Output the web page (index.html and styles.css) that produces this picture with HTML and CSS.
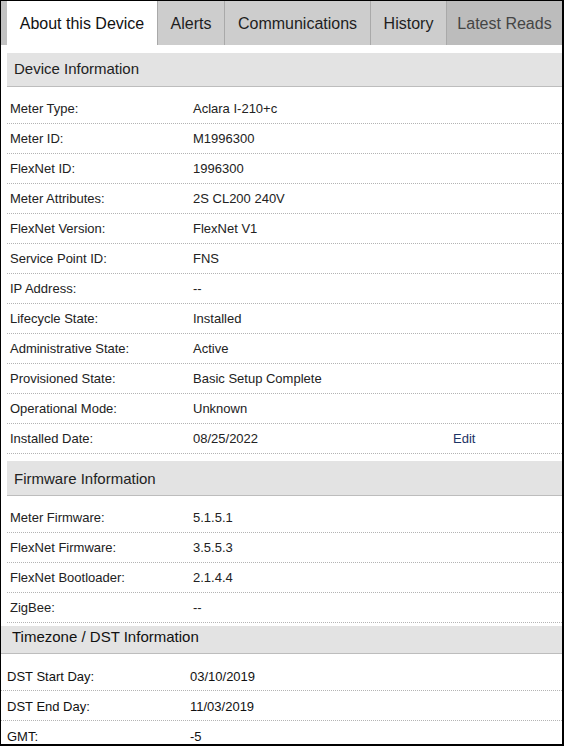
FILE: index.html
```html
<!DOCTYPE html>
<html lang="en">
<head>
<meta charset="utf-8">
<title>About this Device</title>
<link rel="stylesheet" href="styles.css">
</head>
<body>
<div class="frame">
  <div class="tabs">
    <div class="tab tab-active tab-about">About this Device</div>
    <div class="tab tab-alerts">Alerts</div>
    <div class="tab tab-comm">Communications</div>
    <div class="tab tab-history">History</div>
    <div class="tab tab-latest">Latest Reads</div>
  </div>
  <div class="content">
    <section class="section">
      <div class="sec-head">Device Information</div>
      <div class="rows">
        <div class="row"><div class="lbl">Meter Type:</div><div class="val">Aclara I-210+c</div><div class="act"></div></div>
        <div class="row"><div class="lbl">Meter ID:</div><div class="val">M1996300</div><div class="act"></div></div>
        <div class="row"><div class="lbl">FlexNet ID:</div><div class="val">1996300</div><div class="act"></div></div>
        <div class="row"><div class="lbl">Meter Attributes:</div><div class="val">2S CL200 240V</div><div class="act"></div></div>
        <div class="row"><div class="lbl">FlexNet Version:</div><div class="val">FlexNet V1</div><div class="act"></div></div>
        <div class="row"><div class="lbl">Service Point ID:</div><div class="val">FNS</div><div class="act"></div></div>
        <div class="row"><div class="lbl">IP Address:</div><div class="val">--</div><div class="act"></div></div>
        <div class="row"><div class="lbl">Lifecycle State:</div><div class="val">Installed</div><div class="act"></div></div>
        <div class="row"><div class="lbl">Administrative State:</div><div class="val">Active</div><div class="act"></div></div>
        <div class="row"><div class="lbl">Provisioned State:</div><div class="val">Basic Setup Complete</div><div class="act"></div></div>
        <div class="row"><div class="lbl">Operational Mode:</div><div class="val">Unknown</div><div class="act"></div></div>
        <div class="row"><div class="lbl">Installed Date:</div><div class="val">08/25/2022</div><div class="act"><a class="edit" href="#">Edit</a></div></div>
      </div>
    </section>
    <section class="section section-fw">
      <div class="sec-head sec-head-fw">Firmware Information</div>
      <div class="rows">
        <div class="row"><div class="lbl">Meter Firmware:</div><div class="val">5.1.5.1</div><div class="act"></div></div>
        <div class="row"><div class="lbl">FlexNet Firmware:</div><div class="val">3.5.5.3</div><div class="act"></div></div>
        <div class="row"><div class="lbl">FlexNet Bootloader:</div><div class="val">2.1.4.4</div><div class="act"></div></div>
        <div class="row"><div class="lbl">ZigBee:</div><div class="val">--</div><div class="act"></div></div>
      </div>
    </section>
  </div>
  <section class="tz">
    <div class="tz-head">Timezone / DST Information</div>
    <div class="tz-rows">
      <div class="tz-row"><div class="tz-lbl">DST Start Day:</div><div class="tz-val">03/10/2019</div></div>
      <div class="tz-row"><div class="tz-lbl">DST End Day:</div><div class="tz-val">11/03/2019</div></div>
      <div class="tz-row"><div class="tz-lbl">GMT:</div><div class="tz-val">-5</div></div>
    </div>
  </section>
</div>
</body>
</html>
```

FILE: styles.css
```css
html, body {
  margin: 0;
  padding: 0;
  background: #ffffff;
}

body {
  font-family: Arial, "Liberation Sans", Helvetica, sans-serif;
  color: #222222;
}

.frame {
  width: 564px;
  height: 746px;
  box-sizing: border-box;
  border-top: 1px solid #000;
  border-left: 1px solid #000;
  border-right: 2px solid #000;
  border-bottom: 2px solid #000;
  overflow: hidden;
  background: #fff;
}

/* Tabs */
.tabs {
  display: flex;
  height: 44px;
  background: #c2c2c2;
  padding-left: 6px;
}

.tab {
  box-sizing: border-box;
  height: 44px;
  padding-top: 2px;
  line-height: 42px;
  font-size: 16px;
  text-align: center;
  white-space: nowrap;
  overflow: hidden;
  color: #1e1e1e;
  background: #cdcdcd;
  border-left: 1px solid #a9a9a9;
}

.tab-active {
  background: #ffffff;
  border-left: none;
  color: #111;
}

.tab-about { width: 150px; }
.tab-alerts { width: 67px; }
.tab-comm { width: 146px; }
.tab-history { width: 76px; }
.tab-latest {
  width: 116px;
  background: #bcbcbc;
  color: #454545;
}

/* Sections */
.content {
  padding: 8px 0 0 6px;
}

.section-fw {
  margin-top: 7px;
}

.sec-head {
  height: 33px;
  line-height: 31px;
  padding-left: 7px;
  font-size: 15px;
  color: #222;
  background: #e3e3e3;
  border-bottom: 1px solid #bdbdbd;
}

.sec-head-fw {
  height: 34px;
  line-height: 35px;
}

.rows {
  margin-top: 7px;
}

.row {
  display: grid;
  grid-template-columns: 183px 260px 1fr;
  height: 29px;
  line-height: 30px;
  font-size: 13px;
  border-bottom: 1px dotted #b4b4b4;
}

.lbl {
  padding-left: 3px;
}

.val {
  padding-left: 3px;
}

.act {
  padding-left: 3px;
}

.edit {
  color: #1c3466;
  text-decoration: none;
}

/* Timezone */
.tz {
  margin-top: 3px;
}

.tz-head {
  height: 27px;
  line-height: 21px;
  padding-left: 11px;
  font-size: 15px;
  color: #111;
  background: #e3e3e3;
  border-bottom: 1px solid #bdbdbd;
}

.tz-rows {
  margin-top: 7px;
}

.tz-row {
  display: grid;
  grid-template-columns: 189px 1fr;
  height: 29px;
  line-height: 31px;
  font-size: 13px;
  color: #111;
  border-bottom: 1px dotted #b4b4b4;
}

.tz-lbl {
  padding-left: 6px;
}
```
